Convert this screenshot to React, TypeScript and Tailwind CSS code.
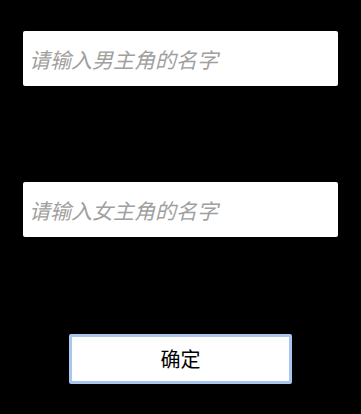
import React, { useState } from "react";

const App: React.FC = () => {
  const [hero, setHero] = useState("");
  const [heroine, setHeroine] = useState("");

  const font = { fontFamily: '"Noto Sans CJK SC", "Noto Sans", sans-serif' };

  return (
    <div
      className="w-full h-[414px] bg-black flex flex-col items-center pt-[31px]"
      style={font}
    >
      <input
        type="text"
        className="w-[315px] h-[55px] bg-white rounded-[2px] px-[6px] text-[21px] italic text-gray-800 placeholder:text-[#a0a0a0] outline-none"
        placeholder="请输入男主角的名字"
        value={hero}
        onChange={e => setHero(e.target.value)}
      />
      <input
        type="text"
        className="mt-[96px] w-[315px] h-[55px] bg-white rounded-[2px] px-[6px] text-[21px] italic text-gray-800 placeholder:text-[#a0a0a0] outline-none"
        placeholder="请输入女主角的名字"
        value={heroine}
        onChange={e => setHeroine(e.target.value)}
      />
      <button
        type="button"
        className="mt-[97px] w-[223px] h-[50px] bg-white border-[3px] border-[#a9c6ec] rounded-[2px] text-[20px] text-black"
      >
        确定
      </button>
    </div>
  );
};

export default App;
